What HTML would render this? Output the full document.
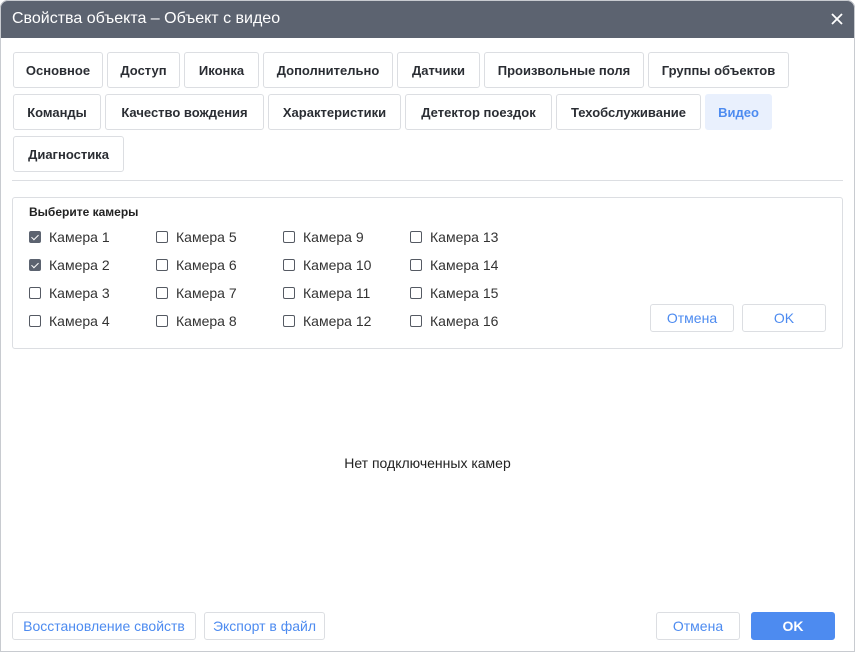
<!DOCTYPE html>
<html><head><meta charset="utf-8"><style>
*{box-sizing:border-box;margin:0;padding:0}
body{width:855px;height:652px;background:#fff;font-family:"Liberation Sans",sans-serif;position:relative;overflow:hidden;color:#222}
.brd{position:absolute;left:0;top:0;width:855px;height:652px;border:1px solid #c8cbd0;border-radius:8px 8px 0 0;z-index:5;pointer-events:none}
.tb{position:absolute;left:0;top:0;width:855px;height:38px;background:#5c6370;color:#fff;font-size:16px;line-height:37px;padding-left:12px;border-radius:8px 8px 0 0}
.x{position:absolute;right:12px;top:13px}
.t{position:absolute;height:36px;border:1px solid #dcdee2;border-radius:3px;font-size:13px;font-weight:bold;color:#2a2d33;display:flex;align-items:center;justify-content:center;white-space:nowrap}
.t.a{background:#e9f0fd;border-color:#e9f0fd;color:#4d8bf0}
.hr{position:absolute;left:12px;top:180px;width:831px;height:1px;background:#dcdee2}
.pn{position:absolute;left:12px;top:197px;width:831px;height:152px;border:1px solid #dcdee2;border-radius:3px}
.lb{position:absolute;left:29px;top:205px;font-size:12px;font-weight:bold;color:#222}
.cb{position:absolute;font-size:14px;color:#333;white-space:nowrap;line-height:16px}
.cb i{position:absolute;left:-20px;top:2px;width:12px;height:12px;border:1px solid #555a63;border-radius:2px}
.cb i.c{background:#5c6370;border-color:#5c6370}
.cb i.c:after{content:"";position:absolute;left:3px;top:1px;width:3px;height:6px;border:solid #fff;border-width:0 1.5px 1.5px 0;transform:rotate(45deg)}
.b{position:absolute;height:28px;border:1px solid #dcdee2;border-radius:3px;font-size:14px;color:#4d8bf0;display:flex;align-items:center;justify-content:center;white-space:nowrap}
.b.p{background:#4d8bf0;border-color:#4d8bf0;color:#fff;font-weight:bold}
.em{position:absolute;left:0;width:855px;top:455px;text-align:center;font-size:14px;color:#222}
</style></head><body>
<div class="tb">Свойства объекта – Объект с видео<svg class="x" width="12" height="12" viewBox="0 0 12 12"><path d="M1 1L11 11M11 1L1 11" stroke="#fff" stroke-width="1.8"/></svg></div>
<div class="t" style="left:13px;top:52px;width:90px">Основное</div>
<div class="t" style="left:107px;top:52px;width:73px">Доступ</div>
<div class="t" style="left:184px;top:52px;width:75px">Иконка</div>
<div class="t" style="left:263px;top:52px;width:130px">Дополнительно</div>
<div class="t" style="left:397px;top:52px;width:83px">Датчики</div>
<div class="t" style="left:484px;top:52px;width:160px">Произвольные поля</div>
<div class="t" style="left:648px;top:52px;width:141px">Группы объектов</div>
<div class="t" style="left:13px;top:94px;width:88px">Команды</div>
<div class="t" style="left:105px;top:94px;width:159px">Качество вождения</div>
<div class="t" style="left:268px;top:94px;width:133px">Характеристики</div>
<div class="t" style="left:405px;top:94px;width:147px">Детектор поездок</div>
<div class="t" style="left:556px;top:94px;width:145px">Техобслуживание</div>
<div class="t a" style="left:705px;top:94px;width:67px">Видео</div>
<div class="t" style="left:13px;top:136px;width:111px">Диагностика</div>
<div class="hr"></div>
<div class="pn"></div>
<div class="lb">Выберите камеры</div>
<div class="cb" style="left:49px;top:229px"><i class="c"></i>Камера 1</div>
<div class="cb" style="left:49px;top:257px"><i class="c"></i>Камера 2</div>
<div class="cb" style="left:49px;top:285px"><i></i>Камера 3</div>
<div class="cb" style="left:49px;top:313px"><i></i>Камера 4</div>
<div class="cb" style="left:176px;top:229px"><i></i>Камера 5</div>
<div class="cb" style="left:176px;top:257px"><i></i>Камера 6</div>
<div class="cb" style="left:176px;top:285px"><i></i>Камера 7</div>
<div class="cb" style="left:176px;top:313px"><i></i>Камера 8</div>
<div class="cb" style="left:303px;top:229px"><i></i>Камера 9</div>
<div class="cb" style="left:303px;top:257px"><i></i>Камера 10</div>
<div class="cb" style="left:303px;top:285px"><i></i>Камера 11</div>
<div class="cb" style="left:303px;top:313px"><i></i>Камера 12</div>
<div class="cb" style="left:430px;top:229px"><i></i>Камера 13</div>
<div class="cb" style="left:430px;top:257px"><i></i>Камера 14</div>
<div class="cb" style="left:430px;top:285px"><i></i>Камера 15</div>
<div class="cb" style="left:430px;top:313px"><i></i>Камера 16</div>
<div class="b" style="left:650px;top:304px;width:84px">Отмена</div>
<div class="b" style="left:742px;top:304px;width:84px">OK</div>
<div class="em">Нет подключенных камер</div>
<div class="b" style="left:12px;top:612px;width:184px">Восстановление свойств</div>
<div class="b" style="left:204px;top:612px;width:121px">Экспорт в файл</div>
<div class="b" style="left:656px;top:612px;width:84px">Отмена</div>
<div class="b p" style="left:751px;top:612px;width:84px">OK</div>
<div class="brd"></div>
</body></html>
